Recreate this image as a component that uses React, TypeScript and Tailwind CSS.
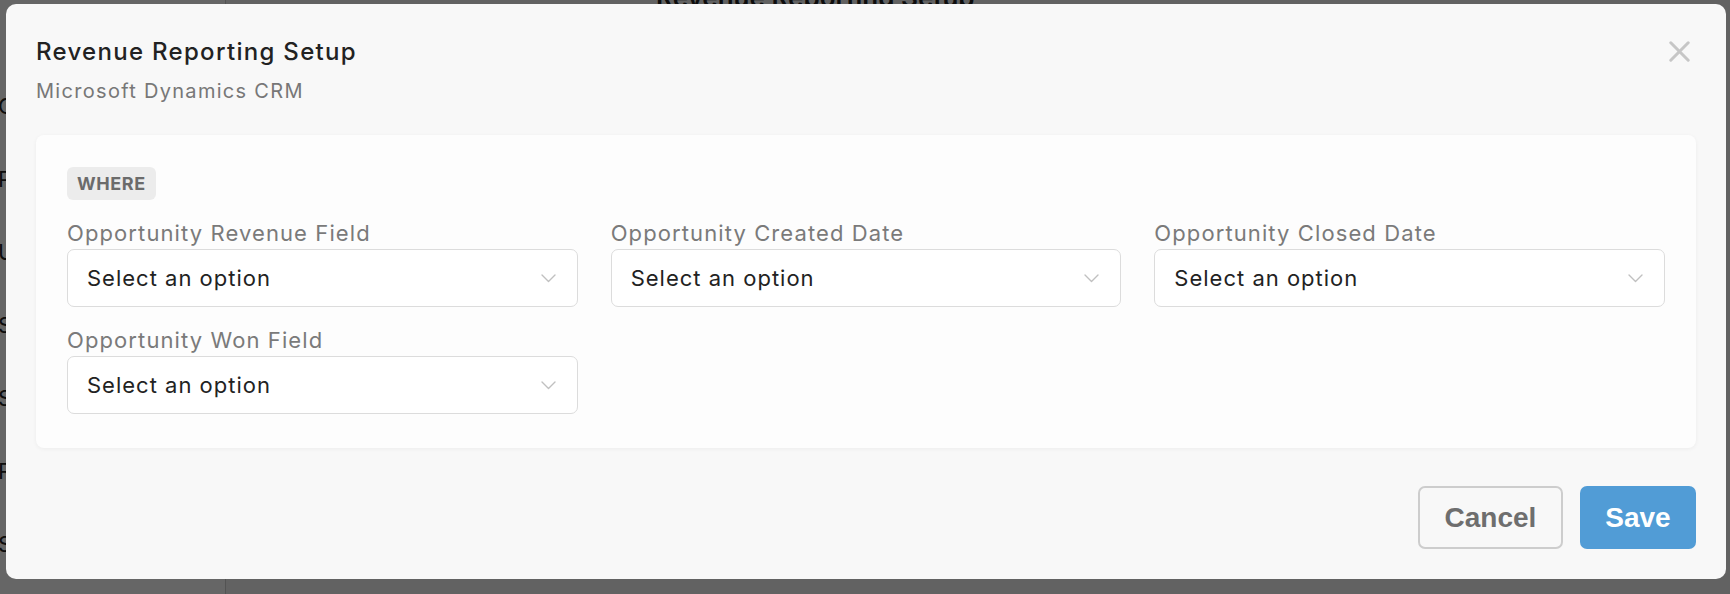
const fields = [
  "Opportunity Revenue Field",
  "Opportunity Created Date",
  "Opportunity Closed Date",
  "Opportunity Won Field",
];

function Chevron() {
  return (
    <svg width="15" height="9" viewBox="0 0 15 9" fill="none" className="shrink-0">
      <path d="M1 1l6.5 6.5L14 1" stroke="#c0c0c0" strokeWidth="1.4" strokeLinecap="round" strokeLinejoin="round" />
    </svg>
  );
}

function CloseIcon() {
  return (
    <svg width="21" height="21" viewBox="0 0 21 21" fill="none">
      <path d="M1.8 1.8l17.4 17.4M19.2 1.8L1.8 19.2" stroke="#c6c6c6" strokeWidth="3" strokeLinecap="round" />
    </svg>
  );
}

function SelectField({ label }: { label: string }) {
  return (
    <div className="flex flex-col">
      <label className="text-[22px] leading-[28px] tracking-[1.1px] text-[#7a7a7a]">{label}</label>
      <div className="mt-[2px] flex h-[58px] items-center justify-between rounded-[7px] border border-[#dcdcdc] bg-white pl-[19px] pr-[21px]">
        <span className="text-[22px] tracking-[1px] text-[#222]">Select an option</span>
        <Chevron />
      </div>
    </div>
  );
}

export default function App() {
  return (
    <div
      className="relative h-[594px] w-full overflow-hidden bg-[#f3f3f3]"
      style={{ fontFamily: "Inter, 'Noto Sans', sans-serif" }}
    >
      {/* page behind the dialog */}
      <div className="flex h-full">
        <aside className="flex w-[226px] flex-col gap-[40px] border-r border-[#cfcfcf] bg-white pt-[90px] text-[22px] text-[#222]">
          <span className="-ml-[2px]">Connections</span>
          <span className="-ml-[2px]">Properties</span>
          <span className="-ml-[2px]">Users</span>
          <span className="-ml-[2px]">Schedules</span>
          <span className="-ml-[2px]">Settings</span>
          <span className="-ml-[2px]">Revenue</span>
          <span className="-ml-[2px]">Settings</span>
          <span className="ml-[30px] font-semibold">Lead Setup</span>
        </aside>
        <main className="flex-1 bg-[#f6f6f6] pl-[430px]">
          <h1 className="-mt-[22px] text-[26px] font-semibold text-[#222]">Revenue Reporting Setup</h1>
        </main>
      </div>
      <div className="absolute inset-0 bg-black/60" />

      {/* dialog */}
      <div className="absolute left-[6px] top-[4px] flex h-[575px] w-[1720px] flex-col rounded-[10px] bg-[#f8f8f8] px-[30px] pt-[33px] pb-[30px]">
        <div className="flex items-start justify-between">
          <div>
            <h2 className="text-[24px] font-medium leading-[30px] tracking-[1.3px] text-[#222]">
              Revenue Reporting Setup
            </h2>
            <p className="mt-[12px] text-[20px] leading-[24px] tracking-[1.3px] text-[#777]">
              Microsoft Dynamics CRM
            </p>
          </div>
          <div className="mr-[6px] mt-[4px]">
            <CloseIcon />
          </div>
        </div>

        <div className="mt-[32px] rounded-[8px] bg-[#fdfdfd] px-[31px] pt-[32px] pb-[34px] shadow-[0_1px_4px_rgba(0,0,0,0.05)]">
          <span className="inline-flex h-[33px] items-center rounded-[6px] bg-[#ececec] px-[10px] text-[18px] font-bold tracking-[0.6px] text-[#6b6b6b]">
            WHERE
          </span>
          <div className="mt-[19px] grid grid-cols-3 gap-x-[33px] gap-y-[19px]">
            {fields.map((f) => (
              <SelectField key={f} label={f} />
            ))}
          </div>
        </div>

        <div
          className="mt-auto flex justify-end gap-[17px]"
          style={{ fontFamily: "'Liberation Sans', Arial, sans-serif" }}
        >
          <button className="h-[63px] w-[145px] rounded-[7px] border-2 border-[#cdcdcd] text-[28px] font-bold text-[#6e6e6e]">
            Cancel
          </button>
          <button className="h-[63px] w-[116px] rounded-[7px] bg-[#519cd6] text-[28px] font-bold text-white">
            Save
          </button>
        </div>
      </div>
    </div>
  );
}
